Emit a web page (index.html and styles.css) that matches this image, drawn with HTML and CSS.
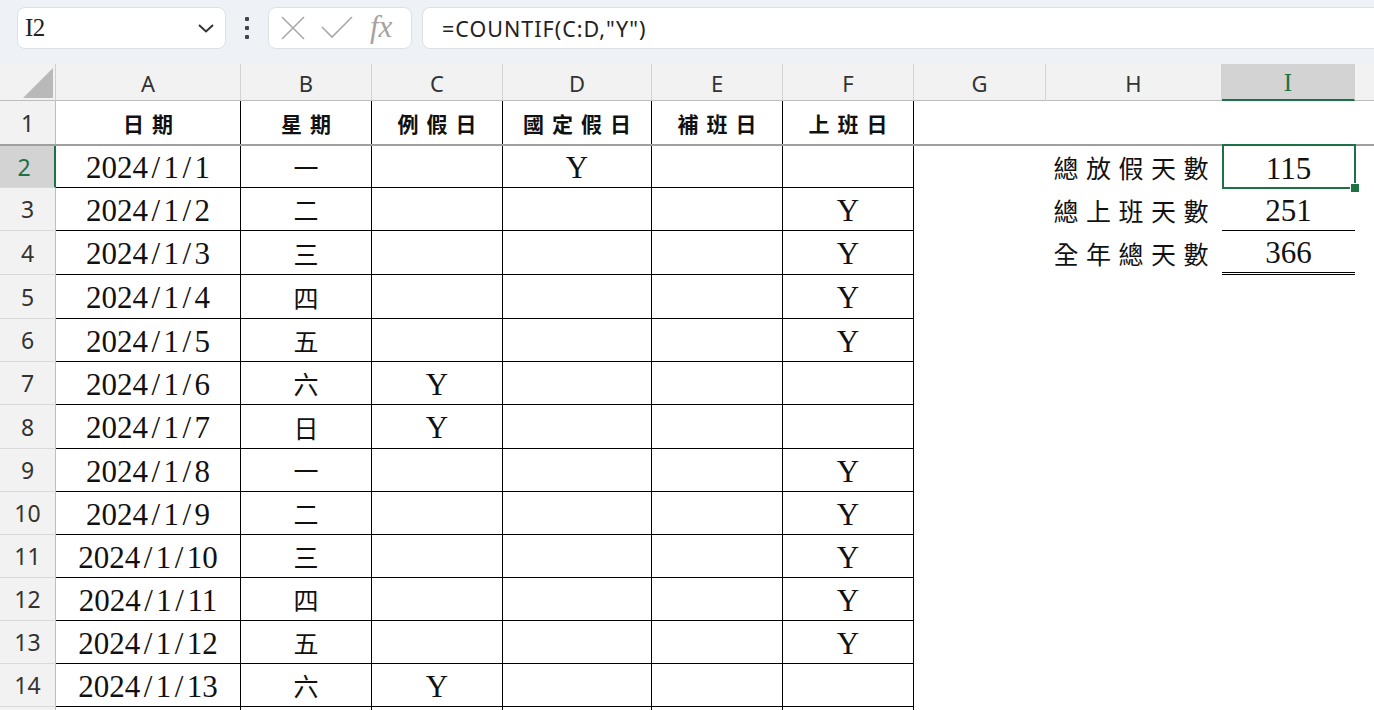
FILE: index.html
```html
<!DOCTYPE html>
<html lang="zh-Hant">
<head>
<meta charset="utf-8">
<title>Sheet</title>
<link rel="stylesheet" href="styles.css">
</head>
<body>
<div class="topbar">
  <div class="namebox"><span class="nm">I2</span>
    <svg width="18" height="12" viewBox="0 0 18 12"><path d="M2 3 L9 9.5 L16 3" fill="none" stroke="#333" stroke-width="2"/></svg>
  </div>
  <div class="dots"><i class="dot"></i><i class="dot"></i><i class="dot"></i></div>
  <div class="fxbox">
    <svg width="26" height="26" viewBox="0 0 26 26"><path d="M2 2 L24 24 M24 2 L2 24" stroke="#a9a9a9" stroke-width="1.6" fill="none"/></svg>
    <svg width="34" height="26" viewBox="0 0 34 26"><path d="M2 12 L12 22 L32 2" stroke="#a9a9a9" stroke-width="1.6" fill="none"/></svg>
    <span class="fx">fx</span>
  </div>
  <div class="formula">=COUNTIF(C:D,"Y")</div>
</div>

<div class="sheet">
  <div class="row colhead">
    <div class="corner"><svg width="56" height="37" viewBox="0 0 56 37"><path d="M53 4 L53 34 L23 34 Z" fill="#b9b9b9"/></svg></div>
    <div class="ch">A</div><div class="ch">B</div><div class="ch">C</div><div class="ch">D</div><div class="ch">E</div><div class="ch">F</div><div class="ch">G</div><div class="ch">H</div><div class="ch sel">I</div><div class="ch last"></div>
  </div>

  <div class="row r1">
    <div class="rh">1</div>
    <div class="c t th">日期</div><div class="c t th">星期</div><div class="c t th">例假日</div><div class="c t th">國定假日</div><div class="c t th">補班日</div><div class="c t th">上班日</div>
    <div class="c"></div><div class="c"></div><div class="c"></div><div class="c"></div>
  </div>

  <div class="row r2">
    <div class="rh sel">2</div>
    <div class="c t b num">2024<span class="sl">/</span>1<span class="sl">/</span>1</div><div class="c t b cjk">一</div><div class="c t b"></div><div class="c t b num">Y</div><div class="c t b"></div><div class="c t b"></div>
    <div class="c"></div><div class="c lab">總放假天數</div><div class="c num active">115</div><div class="c"></div>
  </div>
  <div class="row r3">
    <div class="rh">3</div>
    <div class="c t b num">2024<span class="sl">/</span>1<span class="sl">/</span>2</div><div class="c t b cjk">二</div><div class="c t b"></div><div class="c t b"></div><div class="c t b"></div><div class="c t b num">Y</div>
    <div class="c"></div><div class="c lab">總上班天數</div><div class="c num under">251</div><div class="c"></div>
  </div>
  <div class="row tall">
    <div class="rh">4</div>
    <div class="c t b num">2024<span class="sl">/</span>1<span class="sl">/</span>3</div><div class="c t b cjk">三</div><div class="c t b"></div><div class="c t b"></div><div class="c t b"></div><div class="c t b num">Y</div>
    <div class="c"></div><div class="c lab">全年總天數</div><div class="c num dbl">366</div><div class="c"></div>
  </div>
  <div class="row tall">
    <div class="rh">5</div>
    <div class="c t b num">2024<span class="sl">/</span>1<span class="sl">/</span>4</div><div class="c t b cjk">四</div><div class="c t b"></div><div class="c t b"></div><div class="c t b"></div><div class="c t b num">Y</div>
    <div class="c"></div><div class="c"></div><div class="c"></div><div class="c"></div>
  </div>
  <div class="row">
    <div class="rh">6</div>
    <div class="c t b num">2024<span class="sl">/</span>1<span class="sl">/</span>5</div><div class="c t b cjk">五</div><div class="c t b"></div><div class="c t b"></div><div class="c t b"></div><div class="c t b num">Y</div>
    <div class="c"></div><div class="c"></div><div class="c"></div><div class="c"></div>
  </div>
  <div class="row">
    <div class="rh">7</div>
    <div class="c t b num">2024<span class="sl">/</span>1<span class="sl">/</span>6</div><div class="c t b cjk">六</div><div class="c t b num">Y</div><div class="c t b"></div><div class="c t b"></div><div class="c t b"></div>
    <div class="c"></div><div class="c"></div><div class="c"></div><div class="c"></div>
  </div>
  <div class="row tall">
    <div class="rh">8</div>
    <div class="c t b num">2024<span class="sl">/</span>1<span class="sl">/</span>7</div><div class="c t b cjk">日</div><div class="c t b num">Y</div><div class="c t b"></div><div class="c t b"></div><div class="c t b"></div>
    <div class="c"></div><div class="c"></div><div class="c"></div><div class="c"></div>
  </div>
  <div class="row">
    <div class="rh">9</div>
    <div class="c t b num">2024<span class="sl">/</span>1<span class="sl">/</span>8</div><div class="c t b cjk">一</div><div class="c t b"></div><div class="c t b"></div><div class="c t b"></div><div class="c t b num">Y</div>
    <div class="c"></div><div class="c"></div><div class="c"></div><div class="c"></div>
  </div>
  <div class="row">
    <div class="rh">10</div>
    <div class="c t b num">2024<span class="sl">/</span>1<span class="sl">/</span>9</div><div class="c t b cjk">二</div><div class="c t b"></div><div class="c t b"></div><div class="c t b"></div><div class="c t b num">Y</div>
    <div class="c"></div><div class="c"></div><div class="c"></div><div class="c"></div>
  </div>
  <div class="row">
    <div class="rh">11</div>
    <div class="c t b num">2024<span class="sl">/</span>1<span class="sl">/</span>10</div><div class="c t b cjk">三</div><div class="c t b"></div><div class="c t b"></div><div class="c t b"></div><div class="c t b num">Y</div>
    <div class="c"></div><div class="c"></div><div class="c"></div><div class="c"></div>
  </div>
  <div class="row">
    <div class="rh">12</div>
    <div class="c t b num">2024<span class="sl">/</span>1<span class="sl">/</span>11</div><div class="c t b cjk">四</div><div class="c t b"></div><div class="c t b"></div><div class="c t b"></div><div class="c t b num">Y</div>
    <div class="c"></div><div class="c"></div><div class="c"></div><div class="c"></div>
  </div>
  <div class="row">
    <div class="rh">13</div>
    <div class="c t b num">2024<span class="sl">/</span>1<span class="sl">/</span>12</div><div class="c t b cjk">五</div><div class="c t b"></div><div class="c t b"></div><div class="c t b"></div><div class="c t b num">Y</div>
    <div class="c"></div><div class="c"></div><div class="c"></div><div class="c"></div>
  </div>
  <div class="row">
    <div class="rh">14</div>
    <div class="c t b num">2024<span class="sl">/</span>1<span class="sl">/</span>13</div><div class="c t b cjk">六</div><div class="c t b num">Y</div><div class="c t b"></div><div class="c t b"></div><div class="c t b"></div>
    <div class="c"></div><div class="c"></div><div class="c"></div><div class="c"></div>
  </div>
  <div class="row">
    <div class="rh"></div>
    <div class="c t b"></div><div class="c t b"></div><div class="c t b"></div><div class="c t b"></div><div class="c t b"></div><div class="c t b"></div>
    <div class="c"></div><div class="c"></div><div class="c"></div><div class="c"></div>
  </div>
</div>
</body>
</html>
```
FILE: styles.css
```css
* { box-sizing: border-box; margin: 0; padding: 0; }
body {
  width: 1374px;
  height: 710px;
  overflow: hidden;
  background: #fff;
  font-family: "Noto Sans", "Open Sans", sans-serif;
  color: #222;
}
.topbar {
  height: 64px;
  background: #eef1f6;
  display: flex;
  align-items: flex-start;
  padding: 7px 0 0 17px;
}
.namebox {
  width: 209px;
  height: 42px;
  background: #fff;
  border: 1px solid #dde1e6;
  border-radius: 8px;
  display: flex;
  align-items: center;
  justify-content: space-between;
  padding: 0 10px 0 7px;
  color: #222;
}
.nm {
  font-family: "Liberation Serif", serif;
  font-size: 25px;
  letter-spacing: -0.5px;
}
.dots {
  width: 42px;
  height: 42px;
  display: flex;
  flex-direction: column;
  align-items: center;
  justify-content: center;
  gap: 5px;
}
.dot {
  display: block;
  width: 4px;
  height: 4px;
  background: #444;
  border-radius: 1px;
}
.fxbox {
  width: 144px;
  height: 42px;
  background: #fff;
  border: 1px solid #dde1e6;
  border-radius: 8px;
  display: flex;
  align-items: center;
  padding: 0 0 0 11px;
  gap: 14px;
}
.fx {
  font-family: "Liberation Serif", serif;
  font-style: italic;
  font-size: 31px;
  color: #a3a3a3;
  letter-spacing: 0;
  margin-left: 2px;
  margin-top: -2px;
}
.formula {
  flex: 1;
  margin-left: 10px;
  height: 42px;
  background: #fff;
  border: 1px solid #dde1e6;
  border-right: none;
  border-radius: 8px 0 0 8px;
  display: flex;
  align-items: center;
  padding-left: 19px;
  font-size: 21.5px;
  letter-spacing: 1px;
  color: #222;
}

.row {
  display: grid;
  grid-template-columns: 56px 185px 131px 131px 149px 131px 131px 132px 176px 133px 1fr;
  height: 43px;
}
.row.tall { height: 44px; }
.colhead { height: 37px; background: #f2f2f2; border-bottom: 1px solid #bdbdbd; }
.corner { border-right: 1px solid #cfcfcf; }
.corner svg { display: block; }
.ch {
  display: flex;
  align-items: center;
  justify-content: center;
  font-size: 22px;
  color: #333;
  border-right: 1px solid #d4d4d4;
}
.ch.last { border-right: none; }
.ch.sel {
  background: #d3d3d3;
  color: #1e7145;
  border-bottom: 2px solid #1e7145;
  font-family: "Liberation Serif", serif;
  font-size: 25px;
  padding-top: 2px;
}
.rh {
  display: flex;
  align-items: center;
  justify-content: center;
  background: #f2f2f2;
  border-right: 1px solid #bdbdbd;
  border-bottom: 1px solid #d9d9d9;
  font-size: 23px;
  color: #333;
}
.rh.sel {
  background: #d3d3d3;
  color: #1e7145;
  border-right: 2px solid #1e7145;
  padding-right: 6px;
}
.r1 { height: 45px; border-bottom: 2px solid #a0a0a0; }
.r1 .rh { border-bottom: none; }
.r2 { height: 42px; }

.c {
  display: flex;
  align-items: center;
  justify-content: center;
  position: relative;
  font-family: "Liberation Serif", "Noto Sans CJK TC", serif;
}
.t { border-right: 1px solid #000; }
.b { border-bottom: 1px solid #000; }
.th {
  font-family: "Noto Sans CJK TC", sans-serif;
  font-weight: 700;
  font-size: 21px;
  letter-spacing: 8px;
  padding-left: 8px;
  color: #111;
}
.num {
  font-size: 31px;
  color: #111;
  padding-top: 3px;
}
.sl {
  display: inline-block;
  width: 15.6px;
  text-align: center;
}
.cjk {
  font-family: "Noto Sans CJK TC", sans-serif;
  font-size: 25px;
  color: #111;
}
.lab {
  justify-content: flex-end;
  font-family: "Noto Sans CJK TC", sans-serif;
  font-size: 25px;
  letter-spacing: 7.5px;
  padding-right: 6px;
  color: #111;
}
.under { border-bottom: 1px solid #000; }
.dbl { border-bottom: 3px double #000; }
.active::after {
  content: "";
  position: absolute;
  left: 0;
  top: -2px;
  right: -1px;
  bottom: -1px;
  border: 2px solid #1e7145;
}
.active::before {
  content: "";
  position: absolute;
  right: -5px;
  bottom: -5px;
  width: 8px;
  height: 8px;
  background: #1e7145;
  border: 1px solid #fff;
  z-index: 2;
}
```
